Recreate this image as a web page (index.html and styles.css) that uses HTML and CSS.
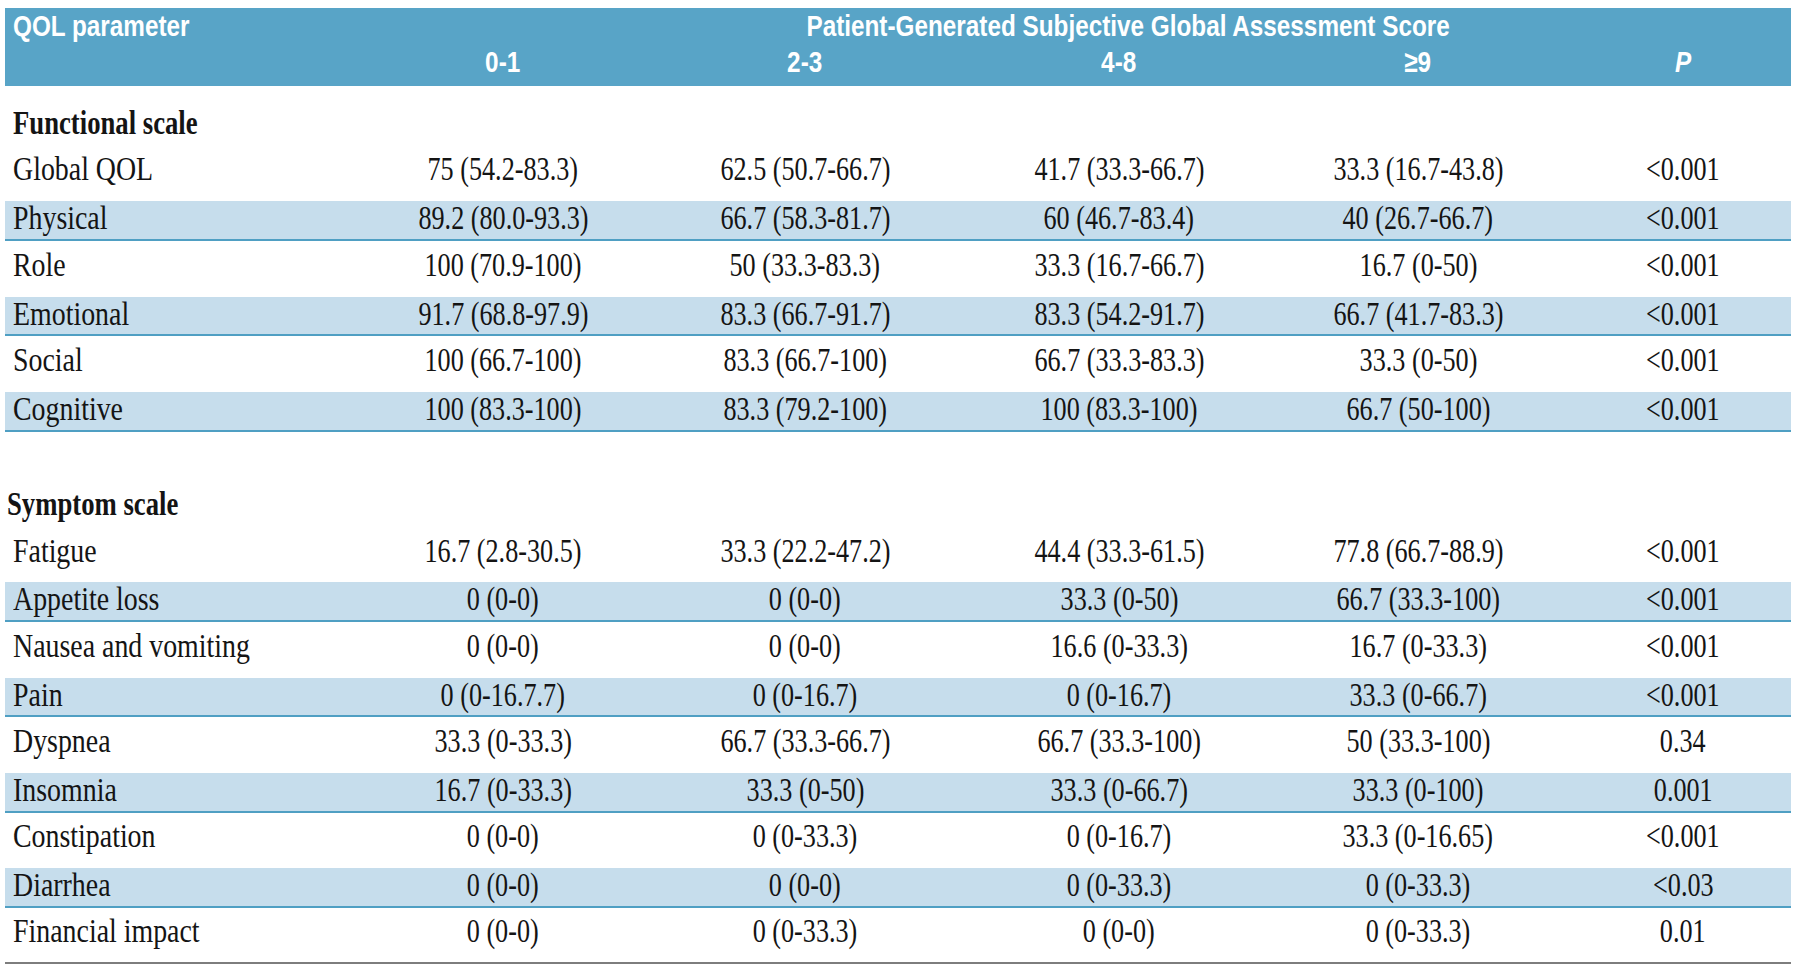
FILE: index.html
```html
<!DOCTYPE html>
<html lang="en">
<head>
<meta charset="utf-8">
<title>QOL parameters by PG-SGA score</title>
<link rel="stylesheet" href="styles.css">
</head>
<body>
<div class="page">
  <div class="qtable">
    <div class="thead">
      <div class="hrow top">
        <div class="hcell first"><span class="hq">QOL parameter</span></div>
        <div class="hcell spanhead"><span class="hq">Patient-Generated Subjective Global Assessment Score</span></div>
      </div>
      <div class="hrow sub">
        <div class="hcell first"></div>
        <div class="hcell ctr"><span class="hq">0-1</span></div>
        <div class="hcell ctr"><span class="hq">2-3</span></div>
        <div class="hcell ctr"><span class="hq">4-8</span></div>
        <div class="hcell ctr"><span class="hq">&ge;9</span></div>
        <div class="hcell ctr pcol"><span class="hq"><i>P</i></span></div>
      </div>
    </div>

    <div class="row sec first-sec"><div class="cell lbl"><span class="sh">Functional scale</span></div></div>
    <div class="row w"><div class="cell lbl"><span class="lt">Global QOL</span></div><div class="cell"><span class="nt">75 (54.2-83.3)</span></div><div class="cell"><span class="nt">62.5 (50.7-66.7)</span></div><div class="cell"><span class="nt">41.7 (33.3-66.7)</span></div><div class="cell"><span class="nt">33.3 (16.7-43.8)</span></div><div class="cell pcol"><span class="nt">&lt;0.001</span></div></div>
    <div class="row s"><div class="cell lbl"><span class="lt">Physical</span></div><div class="cell"><span class="nt">89.2 (80.0-93.3)</span></div><div class="cell"><span class="nt">66.7 (58.3-81.7)</span></div><div class="cell"><span class="nt">60 (46.7-83.4)</span></div><div class="cell"><span class="nt">40 (26.7-66.7)</span></div><div class="cell pcol"><span class="nt">&lt;0.001</span></div></div>
    <div class="row w"><div class="cell lbl"><span class="lt">Role</span></div><div class="cell"><span class="nt">100 (70.9-100)</span></div><div class="cell"><span class="nt">50 (33.3-83.3)</span></div><div class="cell"><span class="nt">33.3 (16.7-66.7)</span></div><div class="cell"><span class="nt">16.7 (0-50)</span></div><div class="cell pcol"><span class="nt">&lt;0.001</span></div></div>
    <div class="row s"><div class="cell lbl"><span class="lt">Emotional</span></div><div class="cell"><span class="nt">91.7 (68.8-97.9)</span></div><div class="cell"><span class="nt">83.3 (66.7-91.7)</span></div><div class="cell"><span class="nt">83.3 (54.2-91.7)</span></div><div class="cell"><span class="nt">66.7 (41.7-83.3)</span></div><div class="cell pcol"><span class="nt">&lt;0.001</span></div></div>
    <div class="row w"><div class="cell lbl"><span class="lt">Social</span></div><div class="cell"><span class="nt">100 (66.7-100)</span></div><div class="cell"><span class="nt">83.3 (66.7-100)</span></div><div class="cell"><span class="nt">66.7 (33.3-83.3)</span></div><div class="cell"><span class="nt">33.3 (0-50)</span></div><div class="cell pcol"><span class="nt">&lt;0.001</span></div></div>
    <div class="row s"><div class="cell lbl"><span class="lt">Cognitive</span></div><div class="cell"><span class="nt">100 (83.3-100)</span></div><div class="cell"><span class="nt">83.3 (79.2-100)</span></div><div class="cell"><span class="nt">100 (83.3-100)</span></div><div class="cell"><span class="nt">66.7 (50-100)</span></div><div class="cell pcol"><span class="nt">&lt;0.001</span></div></div>
    <div class="row w"></div>

    <div class="row sec"><div class="cell lbl sym"><span class="sh">Symptom scale</span></div></div>
    <div class="row w"><div class="cell lbl"><span class="lt">Fatigue</span></div><div class="cell"><span class="nt">16.7 (2.8-30.5)</span></div><div class="cell"><span class="nt">33.3 (22.2-47.2)</span></div><div class="cell"><span class="nt">44.4 (33.3-61.5)</span></div><div class="cell"><span class="nt">77.8 (66.7-88.9)</span></div><div class="cell pcol"><span class="nt">&lt;0.001</span></div></div>
    <div class="row s"><div class="cell lbl"><span class="lt">Appetite loss</span></div><div class="cell"><span class="nt">0 (0-0)</span></div><div class="cell"><span class="nt">0 (0-0)</span></div><div class="cell"><span class="nt">33.3 (0-50)</span></div><div class="cell"><span class="nt">66.7 (33.3-100)</span></div><div class="cell pcol"><span class="nt">&lt;0.001</span></div></div>
    <div class="row w"><div class="cell lbl"><span class="lt">Nausea and vomiting</span></div><div class="cell"><span class="nt">0 (0-0)</span></div><div class="cell"><span class="nt">0 (0-0)</span></div><div class="cell"><span class="nt">16.6 (0-33.3)</span></div><div class="cell"><span class="nt">16.7 (0-33.3)</span></div><div class="cell pcol"><span class="nt">&lt;0.001</span></div></div>
    <div class="row s"><div class="cell lbl"><span class="lt">Pain</span></div><div class="cell"><span class="nt">0 (0-16.7.7)</span></div><div class="cell"><span class="nt">0 (0-16.7)</span></div><div class="cell"><span class="nt">0 (0-16.7)</span></div><div class="cell"><span class="nt">33.3 (0-66.7)</span></div><div class="cell pcol"><span class="nt">&lt;0.001</span></div></div>
    <div class="row w"><div class="cell lbl"><span class="lt">Dyspnea</span></div><div class="cell"><span class="nt">33.3 (0-33.3)</span></div><div class="cell"><span class="nt">66.7 (33.3-66.7)</span></div><div class="cell"><span class="nt">66.7 (33.3-100)</span></div><div class="cell"><span class="nt">50 (33.3-100)</span></div><div class="cell pcol"><span class="nt">0.34</span></div></div>
    <div class="row s"><div class="cell lbl"><span class="lt">Insomnia</span></div><div class="cell"><span class="nt">16.7 (0-33.3)</span></div><div class="cell"><span class="nt">33.3 (0-50)</span></div><div class="cell"><span class="nt">33.3 (0-66.7)</span></div><div class="cell"><span class="nt">33.3 (0-100)</span></div><div class="cell pcol"><span class="nt">0.001</span></div></div>
    <div class="row w"><div class="cell lbl"><span class="lt">Constipation</span></div><div class="cell"><span class="nt">0 (0-0)</span></div><div class="cell"><span class="nt">0 (0-33.3)</span></div><div class="cell"><span class="nt">0 (0-16.7)</span></div><div class="cell"><span class="nt">33.3 (0-16.65)</span></div><div class="cell pcol"><span class="nt">&lt;0.001</span></div></div>
    <div class="row s"><div class="cell lbl"><span class="lt">Diarrhea</span></div><div class="cell"><span class="nt">0 (0-0)</span></div><div class="cell"><span class="nt">0 (0-0)</span></div><div class="cell"><span class="nt">0 (0-33.3)</span></div><div class="cell"><span class="nt">0 (0-33.3)</span></div><div class="cell pcol"><span class="nt">&lt;0.03</span></div></div>
    <div class="row w last"><div class="cell lbl"><span class="lt">Financial impact</span></div><div class="cell"><span class="nt">0 (0-0)</span></div><div class="cell"><span class="nt">0 (0-33.3)</span></div><div class="cell"><span class="nt">0 (0-0)</span></div><div class="cell"><span class="nt">0 (0-33.3)</span></div><div class="cell pcol"><span class="nt">0.01</span></div></div>
  </div>
</div>
</body>
</html>
```

FILE: styles.css
```css
* {
  box-sizing: border-box;
}

html, body {
  margin: 0;
  padding: 0;
  background: #ffffff;
}

.page {
  padding: 8px 9px 0 5px;
}

.qtable {
  width: 1786px;
  color: #141414;
  font-family: "Liberation Serif", "Times New Roman", serif;
  font-size: 34px;
  line-height: 34px;
}

/* header */
.thead {
  background: #58a4c7;
  color: #ffffff;
  font-family: "Liberation Sans", Arial, sans-serif;
  font-weight: 700;
  font-size: 30px;
  line-height: 34px;
  height: 78px;
}

.hrow,
.row {
  display: grid;
  grid-template-columns: 350px 296px 308px 320px 278px 234px;
}

.hrow {
  align-items: center;
}

.hrow.top {
  height: 36.8px;
}

.hrow.sub {
  height: 35.2px;
}

.hcell {
  white-space: nowrap;
}

.hcell.first {
  padding-left: 8px;
}

.hcell.ctr {
  text-align: center;
}

.hcell.spanhead {
  grid-column: 2 / 7;
  text-align: center;
  padding-left: 110px;
}

.hq {
  display: inline-block;
  transform: scaleX(0.81);
  transform-origin: center center;
}

.hcell.first .hq {
  transform-origin: left center;
}

.hq i {
  font-style: italic;
}

/* body rows */
.row {
  align-items: center;
  padding-bottom: 8px;
}

.row.first-sec {
  margin-top: 20px;
}

.row.w {
  height: 55.6px;
}

.row.s {
  height: 39.7px;
  background: #c6ddec;
  border-bottom: 2px solid #4f9fc3;
}

.row.sec {
  height: 39.7px;
}

.row.sec .cell {
  grid-column: 1 / 7;
}

.row.last {
  border-bottom: 2px solid #7d7d7d;
}

.cell {
  text-align: center;
  white-space: nowrap;
}

.cell.lbl {
  text-align: left;
  padding-left: 8px;
}

.cell.lbl.sym {
  padding-left: 2px;
}

.pcol {
  padding-left: 18px;
}

.lt {
  display: inline-block;
  transform: scaleX(0.82);
  transform-origin: left center;
}

.nt {
  display: inline-block;
  transform: scaleX(0.77);
  transform-origin: center center;
}

.sh {
  display: inline-block;
  font-weight: 700;
  transform: scaleX(0.785);
  transform-origin: left center;
}
```
